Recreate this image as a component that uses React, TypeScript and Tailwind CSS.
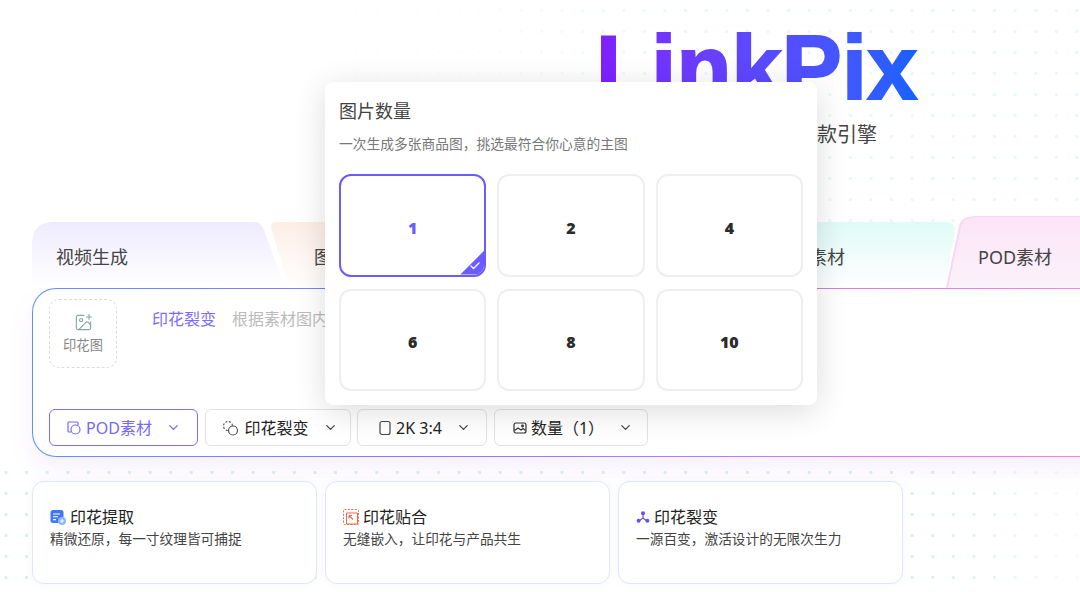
import { ChevronDown, Check, ImagePlus } from 'lucide-react';
import type { ReactNode } from 'react';

function PodIcon() {
  return (
    <svg width="16" height="16" viewBox="0 0 16 16" fill="none" stroke="currentColor" strokeWidth="1.2">
      <path d="M5 12H3a1 1 0 0 1-1-1V3a1 1 0 0 1 1-1h8a1 1 0 0 1 1 1v2" />
      <circle cx="9.5" cy="9.5" r="4.5" />
    </svg>
  );
}

function SplitIcon() {
  return (
    <svg width="18" height="16" viewBox="0 0 18 16" fill="none" stroke="#555" strokeWidth="1.2">
      <circle cx="6" cy="6" r="4.5" strokeDasharray="2 1.6" />
      <circle cx="11" cy="10.5" r="4.5" fill="#fff" />
    </svg>
  );
}

function PortraitIcon() {
  return (
    <svg width="14" height="16" viewBox="0 0 14 16" fill="none" stroke="#444" strokeWidth="1.2">
      <rect x="2" y="1.5" width="10" height="13" rx="2" />
    </svg>
  );
}

function PictureIcon() {
  return (
    <svg width="14" height="14" viewBox="0 0 14 14" fill="none" stroke="#333" strokeWidth="1.2">
      <rect x="1" y="2" width="12" height="10" rx="2" />
      <path d="M1.5 9.5 5 7l3 2 2-1.5 2.5 2" />
      <circle cx="9.5" cy="5" r="0.8" fill="#333" />
    </svg>
  );
}

function ExtractIcon() {
  return (
    <svg width="16" height="16" viewBox="0 0 16 16">
      <rect x="0.5" y="1" width="13" height="13" rx="2.5" fill="#3f78f2" />
      <path d="M3 5h7M3 7.8h5M3 10.6h3" stroke="#fff" strokeWidth="1.1" />
      <circle cx="12" cy="12" r="4" fill="#8db8fa" />
      <path d="M12 10v4M10 12h4" stroke="#fff" strokeWidth="0.9" />
    </svg>
  );
}

function PasteIcon() {
  return (
    <svg width="16" height="16" viewBox="0 0 16 16" fill="none" stroke="#ec6a50">
      <rect x="0.5" y="0.5" width="15" height="15" rx="1" strokeDasharray="2 1.4" />
      <rect x="3.5" y="4" width="11" height="11" rx="0.5" strokeWidth="1.1" />
      <path d="M6 6.5h3M6 6.5v3M6 6.5l4 4" strokeWidth="1.1" />
    </svg>
  );
}

function FissionIcon() {
  return (
    <svg width="14" height="14" viewBox="0 0 14 14">
      <path d="M7 4v4L3 11M7 8l4 3" stroke="#6a4ff0" strokeWidth="1.2" fill="none" />
      <circle cx="7" cy="3.2" r="2" fill="#6a4ff0" />
      <circle cx="2.6" cy="10.8" r="2" fill="#6a4ff0" />
      <circle cx="11.4" cy="10.8" r="2" fill="#6a4ff0" />
    </svg>
  );
}

function ToolButton({
  icon,
  label,
  className,
  active,
}: {
  icon: ReactNode;
  label: string;
  className: string;
  active?: boolean;
}) {
  return (
    <button
      className={`flex h-[37px] shrink-0 items-center justify-center rounded-md border text-[16px] ${className} ${
        active ? 'border-[#7b6dff] text-[#7468ff]' : 'border-[#e2e2e2] pl-[5px] text-[#222]'
      }`}
    >
      {icon}
      <span className="ml-1">{label}</span>
      <ChevronDown size={15} className={`ml-3.5 ${active ? 'text-[#7468ff]' : 'text-[#444]'}`} />
    </button>
  );
}

function FeatureCard({ icon, title, desc }: { icon: ReactNode; title: string; desc: string }) {
  return (
    <div className="h-[103px] w-[285px] shrink-0 rounded-xl border-[1.5px] border-[#e0e6fe] bg-white pl-[17px] pt-[23px] shadow-[0_0_10px_rgba(0,0,0,0.04)]">
      <div className="flex h-6 items-center gap-1 text-[16px] text-[#222]">
        {icon}
        {title}
      </div>
      <p className="text-[13.7px] leading-5 text-[#444]">{desc}</p>
    </div>
  );
}

function CountOption({ value, selected }: { value: number; selected?: boolean }) {
  return (
    <div
      className={`relative flex items-center justify-center overflow-hidden rounded-xl border-2 pt-[5px] text-[16px] font-black ${
        selected ? 'border-[#6a5cff] text-[#6a5cff]' : 'border-[#efefef] text-[#2b2b2b]'
      }`}
    >
      {value}
      {selected && (
        <div className="absolute bottom-0 right-0 flex h-6 w-6 items-end justify-end bg-[#6a5cff] pb-[3px] pr-[3px] [clip-path:polygon(100%_0,100%_100%,0_100%)]">
          <Check size={12} strokeWidth={2.5} className="text-white" />
        </div>
      )}
    </div>
  );
}

export default function App() {
  return (
    <div className="relative h-[592px] w-[1080px] overflow-hidden bg-white [font-family:'Noto_Sans','Noto_Sans_CJK_SC',sans-serif]">
      {/* dotted backdrop, upper right and lower band */}
      <div className="absolute inset-x-0 top-0 h-[294px] bg-[radial-gradient(circle,#e9f9fb_1.4px,transparent_1.7px)] bg-[length:20.6px_21px] bg-[position:-4.3px_0] [mask-image:linear-gradient(90deg,transparent_15%,rgba(0,0,0,0.2)_42%,#000_62%)]" />
      <div className="absolute inset-x-0 bottom-0 top-[462px] bg-[radial-gradient(circle,#d8f3ea_1.4px,transparent_1.7px)] bg-[length:20.6px_21px] bg-[position:-4.3px_0] [mask-image:linear-gradient(90deg,#000_86%,rgba(0,0,0,0.2)_100%)]" />

      <div className="relative">
        <header className="h-[216px] pl-[592px]">
          <div className="h-[120px] pt-[18px]">
            <span className="block w-fit bg-gradient-to-r from-[#7f1cff] to-[#0a62ff] bg-clip-text px-1 text-[90px] font-bold leading-[100px] tracking-[0.2px] text-transparent [-webkit-text-stroke:2px_transparent] [font-family:'Liberation_Sans',sans-serif]">
              LinkPix
            </span>
          </div>
          <p className="w-[285px] text-right text-[20px] leading-[30px] text-[#444]">电商爆款引擎</p>
        </header>

        <nav className="flex h-[72px] items-end text-[18px] text-[#444]">
          <div className="ml-8 h-[66px] w-[253px] shrink-0 bg-gradient-to-b from-[#efebff] to-white pl-6 pt-[22px] [clip-path:path('M0_66V22Q0_0_22_0H223Q229_0_232_8L253_66Z')]">
            视频生成
          </div>
          <div className="-ml-[15px] h-[66px] w-[230px] shrink-0 bg-gradient-to-b from-[#fdeee6] to-white pl-11 pt-[22px] [clip-path:path('M20_66L1_6Q0_0_6_0H230V66Z')]">
            图片生成
          </div>
          <div className="-ml-[15px] h-[66px] w-[235px] shrink-0 bg-gradient-to-b from-[#fff6dd] to-white pl-11 pt-[22px] [clip-path:path('M20_66L1_6Q0_0_6_0H235V66Z')]">
            商品套图
          </div>
          <div className="-ml-[15px] h-[66px] w-[250px] shrink-0 bg-gradient-to-b from-[#e0fbf8] to-white pl-[68px] pt-[22px] [clip-path:path('M0_0H240Q250_0_250_8L240_66H0Z')]">
            服装素材
          </div>
          <div className="-ml-[9px] h-[72px] w-[146px] shrink-0 bg-[#fbd6f4] [clip-path:path('M0_72L13_10Q15_0_30_0H146V72Z')]">
            <div className="ml-0.5 mt-px h-[71px] bg-gradient-to-b from-[#fce4f8] to-[#fbf2fa] pl-[30px] pt-[27px] [clip-path:path('M0_71L13_10Q15_0_30_0H146V71Z')]">
              POD素材
            </div>
          </div>
        </nav>

        <section className="ml-8 flex h-[169px] w-[1120px] flex-col justify-between rounded-[24px] border-[1.5px] border-transparent pb-[10px] pl-4 pt-[10px] shadow-[0_12px_24px_rgba(170,110,240,0.1)] [background:linear-gradient(#fff,#fff)_padding-box,linear-gradient(90deg,#5f8fff,#8a78ff_35%,#ff80e0_95%)_border-box]">
          <div className="flex">
            <div className="flex h-[69px] w-[68px] flex-col items-center justify-center rounded-[10px] border border-dashed border-[#dcdcdc] pt-0.5 text-[13.3px] text-[#888]">
              <ImagePlus size={19} strokeWidth={1.4} className="mb-1 text-[#86a5a5]" />
              印花图
            </div>
            <div className="ml-[35px] flex gap-4 pt-[9px] text-[16px] leading-[22px]">
              <span className="text-[#7c6cff]">印花裂变</span>
              <span className="text-[#bbb]">根据素材图内容智能生成</span>
            </div>
          </div>
          <div className="flex gap-[6.5px]">
            <ToolButton active icon={<PodIcon />} label="POD素材" className="w-[149px]" />
            <ToolButton icon={<SplitIcon />} label="印花裂变" className="w-[146px]" />
            <ToolButton icon={<PortraitIcon />} label="2K 3:4" className="w-[130px]" />
            <ToolButton icon={<PictureIcon />} label="数量（1）" className="w-[154px]" />
          </div>
        </section>

        <div className="ml-8 mt-6 flex gap-2">
          <FeatureCard icon={<ExtractIcon />} title="印花提取" desc="精微还原，每一寸纹理皆可捕捉" />
          <FeatureCard icon={<PasteIcon />} title="印花贴合" desc="无缝嵌入，让印花与产品共生" />
          <FeatureCard icon={<FissionIcon />} title="印花裂变" desc="一源百变，激活设计的无限次生力" />
        </div>
      </div>

      {/* quantity popover */}
      <div className="absolute left-[325px] top-[82px] h-[323px] w-[492px] rounded-lg bg-white px-[14px] pt-4 shadow-[0_6px_32px_rgba(0,0,0,0.14)]">
        <h2 className="text-[18px] leading-[26px] text-[#444]">图片数量</h2>
        <p className="mt-[10px] text-[13.76px] leading-5 text-[#777]">一次生成多张商品图，挑选最符合你心意的主图</p>
        <div className="mt-5 grid h-[217px] grid-cols-3 grid-rows-2 gap-x-[11px] gap-y-3">
          <CountOption value={1} selected />
          <CountOption value={2} />
          <CountOption value={4} />
          <CountOption value={6} />
          <CountOption value={8} />
          <CountOption value={10} />
        </div>
      </div>
    </div>
  );
}
